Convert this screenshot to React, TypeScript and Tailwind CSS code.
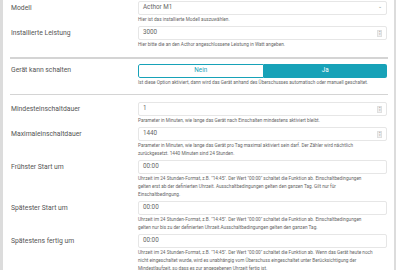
import React from 'react';

const font = { fontFamily: 'Roboto, "Liberation Sans", Arial, sans-serif' };

function Help({ children }: { children: React.ReactNode }) {
  return <div className="mt-[1px] mb-[2px] text-[4.7px] leading-[8px] text-[#666] whitespace-nowrap">{children}</div>;
}

function Spin() {
  return (
    <div className="w-[5px] h-[7px] bg-[#f0f0f0] border border-[#e0e0e0] flex flex-col items-center justify-center text-[3px] leading-[3px] text-[#aaa]">
      <span>▴</span>
      <span>▾</span>
    </div>
  );
}

function Field({ value, kind }: { value: string; kind?: 'select' | 'number' }) {
  return (
    <div className="h-[14px] border border-[#e6e6e6] rounded-[2px] bg-white flex items-center justify-between pl-[4px] pr-[4px] text-[6.3px] text-[#666]">
      <span>{value}</span>
      {kind === 'select' && <span className="text-[5px] text-[#888] -mt-[2px]">⌄</span>}
      {kind === 'number' && <Spin />}
    </div>
  );
}

function Row({ label, children }: { label: string; children: React.ReactNode }) {
  return (
    <div className="grid grid-cols-[127px_1fr]">
      <div className="h-[14px] flex items-center text-[6.8px] text-[#555]">{label}</div>
      <div>{children}</div>
    </div>
  );
}

function Sep() {
  return <div className="h-[1.5px] bg-[#d4d4d4] ml-[-1px] mr-[-1px]" />;
}

export default function App() {
  return (
    <div style={font} className="w-[400px] h-[270px] overflow-hidden bg-white flex">
      <div className="w-[3px] bg-[#dcdcdc]" />
      <div className="flex-1 pl-[8px] pr-[7px] pt-[1px]">
        <Row label="Modell">
          <Field value="Acthor M1" kind="select" />
          <Help>Hier ist das installierte Modell auszuwählen.</Help>
        </Row>
        <Row label="Installierte Leistung">
          <Field value="3000" kind="number" />
          <Help>Hier bitte die an den Acthor angeschlossene Leistung in Watt angeben.</Help>
        </Row>
        <div className="mt-[6px] mb-[5px]">
          <Sep />
        </div>
        <Row label="Gerät kann schalten">
          <div className="h-[14px] flex text-[6.3px] rounded-[2px] overflow-hidden">
            <div className="flex-1 flex items-center justify-center border border-[#17a2b8] text-[#17a2b8] bg-white rounded-l-[2px]">Nein</div>
            <div className="flex-1 flex items-center justify-center bg-[#17a2b8] text-white">Ja</div>
          </div>
          <Help>Ist diese Option aktiviert, dann wird das Gerät anhand des Überschusses automatisch oder manuell geschaltet.</Help>
        </Row>
        <div className="mt-[5px] mb-[7px]">
          <Sep />
        </div>
        <Row label="Mindesteinschaltdauer">
          <Field value="1" kind="number" />
          <Help>Parameter in Minuten, wie lange das Gerät nach Einschalten mindestens aktiviert bleibt.</Help>
        </Row>
        <Row label="Maximaleinschaltdauer">
          <Field value="1440" kind="number" />
          <Help>
            Parameter in Minuten, wie lange das Gerät pro Tag maximal aktiviert sein darf. Der Zähler wird nächtlich
            <br />
            zurückgesetzt. 1440 Minuten sind 24 Stunden.
          </Help>
        </Row>
        <Row label="Frühster Start um">
          <Field value="00:00" />
          <Help>
            Uhrzeit im 24 Stunden-Format, z.B. "14:45". Der Wert "00:00" schaltet die Funktion ab. Einschaltbedingungen
            <br />
            gelten erst ab der definierten Uhrzeit. Ausschaltbedingungen gelten den ganzen Tag. Gilt nur für
            <br />
            Einschaltbedingung.
          </Help>
        </Row>
        <Row label="Spätester Start um">
          <Field value="00:00" />
          <Help>
            Uhrzeit im 24 Stunden-Format, z.B. "14:45". Der Wert "00:00" schaltet die Funktion ab. Einschaltbedingungen
            <br />
            gelten nur bis zu der definierten Uhrzeit.Ausschaltbedingungen gelten den ganzen Tag.
          </Help>
        </Row>
        <Row label="Spätestens fertig um">
          <Field value="00:00" />
          <Help>
            Uhrzeit im 24 Stunden-Format, z.B. "14:45". Der Wert "00:00" schaltet die Funktion ab. Wenn das Gerät heute noch
            <br />
            nicht eingeschaltet wurde, wird es unabhängig vom Überschuss eingeschaltet unter Berücksichtigung der
            <br />
            Mindestlaufzeit, so dass es zur angegebenen Uhrzeit fertig ist.
          </Help>
        </Row>
      </div>
      <div className="w-[2px] bg-[#dcdcdc]" />
      <div className="w-[4px]" />
    </div>
  );
}
